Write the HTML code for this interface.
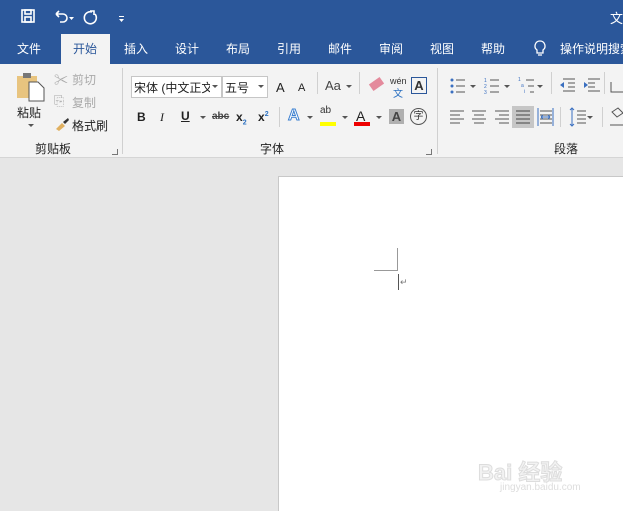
<!DOCTYPE html><html><head><meta charset="utf-8"><style>
*{margin:0;padding:0;box-sizing:border-box}
body{width:623px;height:511px;overflow:hidden;background:#e6e6e6;font-family:"Liberation Sans","Noto Sans CJK SC",sans-serif;position:relative}
.a{position:absolute;white-space:nowrap}
.w{color:#fff;font-size:12px}
.t{font-size:12px;color:#222}
.g{color:#aaa}
.dd{position:absolute;border:3px solid transparent;border-top-color:#555}
</style></head><body>
<div class="a" style="left:0;top:0;width:623px;height:64px;background:#2b579a"></div>
<svg class="a" style="left:20px;top:8px" width="110" height="18"><g fill="none" stroke="#fff" stroke-width="1.6"><rect x="2" y="2" width="12" height="12"/><rect x="5" y="2" width="6" height="4"/><rect x="5" y="9" width="6" height="5"/><path d="M36 6h7a4 4 0 0 1 0 8h-3M36 6l3-3M36 6l3 3"/><path d="M72 4a6 6 0 1 0 3 2M70 3h4v4"/></g><path d="M49 9h5l-2.5 3z M99 11h5l-2.5 3z M99 8h5v1h-5z" fill="#fff"/></svg>
<div class="a w" style="left:610px;top:8px;font-size:13px">文</div>
<div class="a" style="left:61px;top:34px;width:49px;height:30px;background:#f3f3f3"></div>
<div class="a w" style="left:17px;top:40px">文件</div>
<div class="a t" style="left:73px;top:40px;color:#2b579a">开始</div>
<div class="a w" style="left:124px;top:40px">插入</div>
<div class="a w" style="left:175px;top:40px">设计</div>
<div class="a w" style="left:226px;top:40px">布局</div>
<div class="a w" style="left:277px;top:40px">引用</div>
<div class="a w" style="left:328px;top:40px">邮件</div>
<div class="a w" style="left:379px;top:40px">审阅</div>
<div class="a w" style="left:430px;top:40px">视图</div>
<div class="a w" style="left:481px;top:40px">帮助</div>
<svg class="a" style="left:533px;top:39px" width="14" height="20"><path d="M7 2a5 5 0 0 0-3 9v3h6v-3a5 5 0 0 0-3-9zM5 16h4" fill="none" stroke="#fff" stroke-width="1.3"/></svg>
<div class="a w" style="left:560px;top:40px">操作说明搜索</div>
<div class="a" style="left:0;top:64px;width:623px;height:94px;background:#f3f3f3;border-bottom:1px solid #d5d5d5"></div>
<div class="a" style="left:122px;top:68px;width:1px;height:86px;background:#d0d0d0"></div>
<div class="a" style="left:437px;top:68px;width:1px;height:86px;background:#d0d0d0"></div>
<svg class="a" style="left:16px;top:70px" width="30" height="32"><rect x="1" y="6" width="20" height="22" fill="#e8c47f"/><rect x="7" y="3" width="8" height="5" fill="#777"/><path d="M13 12h9l6 6v13H13z" fill="#fff" stroke="#555"/></svg>
<div class="a t" style="left:17px;top:104px">粘贴</div>
<div class="dd" style="left:28px;top:124px"></div>
<div class="a t g" style="left:72px;top:71px">剪切</div>
<div class="a t g" style="left:72px;top:94px">复制</div>
<div class="a g" style="left:54px;top:70px;font-size:14px">✂</div>
<div class="a g" style="left:54px;top:93px;font-size:13px">⎘</div>
<svg class="a" style="left:54px;top:117px" width="16" height="14"><path d="M2 12l6-6 3 3-6 5z" fill="#e0b060"/><path d="M9 5l5-4 1 2-4 4z" fill="#333"/></svg>
<div class="a t" style="left:72px;top:117px">格式刷</div>
<div class="a t" style="left:35px;top:140px">剪贴板</div>
<div class="a" style="left:112px;top:149px;width:6px;height:6px;border-right:1px solid #777;border-bottom:1px solid #777"></div>
<div class="a" style="left:131px;top:76px;width:91px;height:22px;background:#fff;border:1px solid #c6c6c6"></div>
<div class="a t" style="left:134px;top:79px">宋体 (中文正文</div>
<div class="a" style="left:210px;top:77px;width:11px;height:20px;background:#fff"></div>
<div class="dd" style="left:212px;top:85px"></div>
<div class="a" style="left:222px;top:76px;width:46px;height:22px;background:#fff;border:1px solid #c6c6c6"></div>
<div class="a t" style="left:225px;top:79px">五号</div>
<div class="dd" style="left:258px;top:85px"></div>
<div class="a t" style="left:276px;top:80px;font-size:13px">A</div>
<div class="a t" style="left:298px;top:82px;font-size:11px">A</div>
<div class="a" style="left:317px;top:72px;width:1px;height:22px;background:#d0d0d0"></div>
<div class="a t" style="left:325px;top:78px;font-size:13px;color:#444">Aa</div>
<div class="dd" style="left:346px;top:85px"></div>
<div class="a" style="left:359px;top:72px;width:1px;height:22px;background:#d0d0d0"></div>
<div class="a" style="left:370px;top:80px;width:13px;height:8px;background:#e48a9c;transform:rotate(-35deg)"></div>
<div class="a" style="left:390px;top:76px;font-size:9px;color:#333">wén</div>
<div class="a" style="left:393px;top:85px;font-size:10px;color:#2b70c0">文</div>
<div class="a" style="left:411px;top:77px;width:16px;height:17px;border:1px solid #2b579a;font-size:13px;font-weight:bold;text-align:center;line-height:15px;color:#333">A</div>
<div class="a t" style="left:137px;top:110px;font-weight:bold">B</div>
<div class="a t" style="left:160px;top:110px;font-style:italic;font-family:'Liberation Serif'">I</div>
<div class="a t" style="left:181px;top:109px;text-decoration:underline;font-weight:bold">U</div>
<div class="dd" style="left:200px;top:116px"></div>
<div class="a t" style="left:212px;top:111px;font-size:10px;text-decoration:line-through;font-weight:bold;color:#444">abc</div>
<div class="a t" style="left:236px;top:110px;font-weight:bold">x<sub style="font-size:7px;color:#2b70c0">2</sub></div>
<div class="a t" style="left:258px;top:110px;font-weight:bold">x<sup style="font-size:7px;color:#2b70c0">2</sup></div>
<div class="a" style="left:279px;top:107px;width:1px;height:20px;background:#d0d0d0"></div>
<div class="a" style="left:288px;top:107px;font-size:16px;color:#fff;-webkit-text-stroke:1px #3a7fd0;font-weight:bold">A</div>
<div class="dd" style="left:307px;top:116px"></div>
<div class="a" style="left:320px;top:105px;font-size:10px;color:#333">ab</div>
<div class="a" style="left:320px;top:122px;width:16px;height:4px;background:#ff0"></div>
<div class="dd" style="left:342px;top:116px"></div>
<div class="a t" style="left:356px;top:108px;font-size:14px">A</div>
<div class="a" style="left:354px;top:122px;width:16px;height:4px;background:#e00"></div>
<div class="dd" style="left:376px;top:116px"></div>
<div class="a" style="left:389px;top:109px;width:15px;height:15px;background:#b0b0b0;font-size:13px;font-weight:bold;text-align:center;line-height:15px;color:#444">A</div>
<div class="a" style="left:410px;top:108px;width:17px;height:17px;border:1px solid #555;border-radius:50%;font-size:10px;text-align:center;line-height:15px;color:#333">字</div>
<div class="a t" style="left:260px;top:140px">字体</div>
<div class="a" style="left:426px;top:149px;width:6px;height:6px;border-right:1px solid #777;border-bottom:1px solid #777"></div>
<!-- paragraph, origin (440,70) -->
<div class="a" style="left:512px;top:106px;width:22px;height:22px;background:#c6c6c6"></div>
<svg class="a" style="left:440px;top:70px" width="183" height="60"><g stroke="#555" stroke-width="1" fill="none">
<path d="M16 10h9M16 16h9M16 22h9"/>
<path d="M50 10h9M50 16h9M50 22h9"/>
<path d="M86 10h8M88 16h6M90 22h4"/>
<path d="M123 9h12M128 13h7M128 17h7M123 21h12"/>
<path d="M148 9h12M148 13h7M148 17h7M148 21h12"/>
<path d="M10 41h14M10 45h10M10 49h14M10 53h10"/>
<path d="M32 41h14M34 45h10M32 49h14M34 53h10"/>
<path d="M55 41h14M59 45h10M55 49h14M59 53h10"/>
<path d="M76 41h14M76 45h14M76 49h14M76 53h14" stroke="#444"/>
<path d="M100 41h12M100 45h12M100 49h12M100 53h12"/>
<path d="M137 41h9M137 45h9M137 49h9M137 53h9"/>
</g>
<g fill="#3a6fc0" font-size="5" font-family="Liberation Sans"><circle cx="12" cy="10" r="1.5"/><circle cx="12" cy="16" r="1.5"/><circle cx="12" cy="22" r="1.5"/>
<text x="44" y="12">1</text><text x="44" y="18">2</text><text x="44" y="24">3</text>
<text x="78" y="11">1</text><text x="81" y="17">a</text><text x="84" y="23">i</text>
<path d="M120 15l4-3v6zM144 12l4 3-4 3z"/></g>
<path d="M98 38v18M113 38v18M101 47h9M101 47l2-2M101 47l2 2M110 47l-2-2M110 47l-2 2" stroke="#3a6fc0" fill="none"/>
<path d="M132 38v18M130 40l2-2 2 2M130 54l2 2 2-2" stroke="#3a6fc0" fill="none"/>
<path d="M171 12v10h12" stroke="#555" fill="none"/>
<path d="M172 42l6-4 5 5-6 4zM170 55h13" stroke="#555" fill="none"/>
</svg>
<div class="dd" style="left:470px;top:85px"></div>
<div class="dd" style="left:504px;top:85px"></div>
<div class="dd" style="left:537px;top:85px"></div>
<div class="dd" style="left:587px;top:116px"></div>
<div class="a" style="left:551px;top:72px;width:1px;height:22px;background:#d0d0d0"></div>
<div class="a" style="left:604px;top:72px;width:1px;height:22px;background:#d0d0d0"></div>
<div class="a" style="left:560px;top:107px;width:1px;height:20px;background:#d0d0d0"></div>
<div class="a" style="left:602px;top:107px;width:1px;height:20px;background:#d0d0d0"></div>
<div class="a t" style="left:554px;top:140px">段落</div>
<div class="a" style="left:278px;top:176px;width:345px;height:335px;background:#fff;border-left:1px solid #c8c8c8;border-top:1px solid #c8c8c8"></div>
<div class="a" style="left:397px;top:248px;width:1px;height:23px;background:#999"></div>
<div class="a" style="left:374px;top:270px;width:24px;height:1px;background:#999"></div>
<div class="a" style="left:398px;top:274px;width:1px;height:16px;background:#555"></div>
<div class="a" style="left:400px;top:277px;font-size:9px;color:#777">↵</div>
<div class="a" style="left:478px;top:455px;font-size:22px;color:#f2f2f2;font-weight:bold;-webkit-text-stroke:1px #ddd">Bai 经验</div>
<div class="a" style="left:500px;top:482px;font-size:10px;color:#ddd">jingyan.baidu.com</div>
</body></html>
